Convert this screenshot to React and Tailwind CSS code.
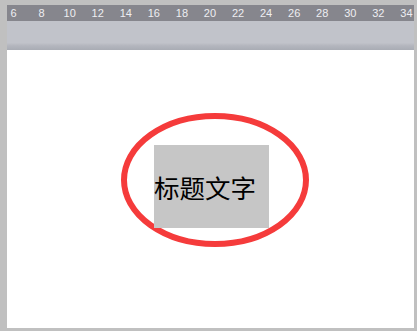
const ticks = [6, 8, 10, 12, 14, 16, 18, 20, 22, 24, 26, 28, 30, 32, 34];

export default function App() {
    return (
        <div className="h-[331px] w-[417px] overflow-hidden bg-[#c0c0c0] pl-[7px] pr-[3px] pt-[5px] pb-[3px] font-['Liberation_Sans',sans-serif]">
            <div className="flex h-full flex-col">
                {/* ruler */}
                <div className="flex h-[16px] shrink-0 items-center overflow-hidden bg-[#86868d]">
                    <div className="-ml-[7.5px] flex">
                        {ticks.map((t) => (
                            <span key={t} className="w-[28.07px] shrink-0 text-center text-[11px] leading-none text-[#eeeef2]">
                                {t}
                            </span>
                        ))}
                    </div>
                </div>
                {/* toolbar band */}
                <div className="h-[29px] shrink-0 bg-[linear-gradient(to_bottom,#c1c3ca_0%,#c1c3ca_75%,#b4b6be_85%,#a9acb4_100%)]" />
                {/* canvas */}
                <div className="relative flex-1 bg-white">
                    <svg className="absolute left-[114px] top-[63px]" width="188" height="134" viewBox="0 0 188 134">
                        <ellipse cx="94" cy="67" rx="91" ry="64" fill="none" stroke="#f53b3b" strokeWidth="6" />
                    </svg>
                    <div className="absolute left-[147px] top-[95px] flex h-[83px] w-[115px] items-center bg-[#c6c6c6]">
                        <span className="font-['Noto_Sans_CJK_SC',sans-serif] text-[25.5px] leading-none text-black">标题文字</span>
                    </div>
                </div>
            </div>
        </div>
    );
}
